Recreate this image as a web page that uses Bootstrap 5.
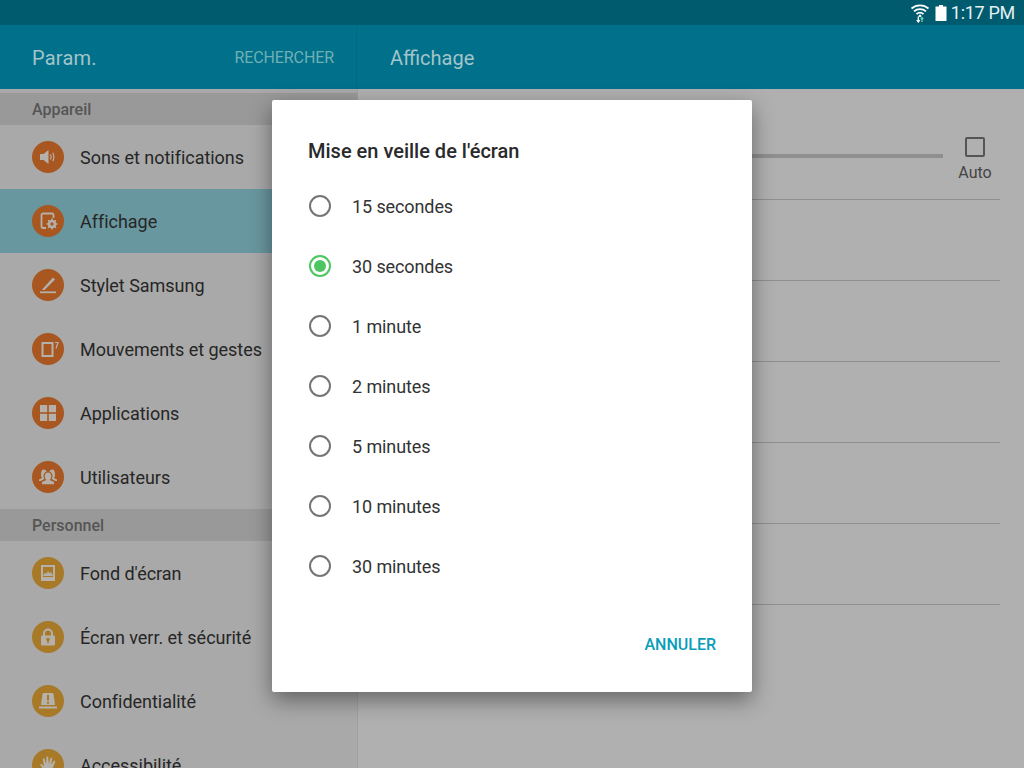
<!DOCTYPE html>
<html lang="fr">
<head>
<meta charset="utf-8">
<title>Param.</title>
<link rel="stylesheet" href="https://cdn.jsdelivr.net/npm/bootstrap@5.3.0/dist/css/bootstrap.min.css">
<style>
html,body{height:768px;overflow:hidden;background:#b0b0b0;font-family:Roboto,"Liberation Sans",sans-serif}
.stage{width:1024px;height:768px;overflow:hidden;position:relative}
.sbar{height:25px;background:#005b6f;color:#e6f0f2;font-size:18px;padding-right:9px;gap:4px}
.sbar span{line-height:25px;letter-spacing:-.3px}
.wifi{margin-right:1px}
.abar{height:64px;background:#00708b}
.ab-left{width:357px;padding:2px 22px 0 32px;border-right:1px solid #006a83}
.ab-title{font-size:20px;color:#a3c4c9;letter-spacing:.2px}
.ab-search{font-size:16px;color:#6fb0b5;letter-spacing:-.1px}
.ab-right{padding:2px 0 0 33px;font-size:20px;color:#a3c4c9}
.side{width:358px;background:#a9a9a9;border-right:1px solid #a0a0a0;padding-top:4px;height:679px;overflow:hidden;flex:none}
.sect{height:32px;line-height:34px;background:#999;color:#555;font-size:16px;font-weight:500;padding-left:32px}
.sitem{height:64px;padding-left:32px;gap:16px;font-size:18px;color:#262626;letter-spacing:-.03px}
.sitem.on{background:#69979f}
.ico{width:32px;height:32px;flex:none;display:block}
.pane{flex:1;padding:0 24px 0 32px}
.top-row{height:111px;border-bottom:1px solid #8f8f8f;padding-top:48px}
.track{flex:1;height:4px;margin-top:17px;background:#8f8f8f}
.auto{width:57px;color:#444;font-size:16px;padding-left:7px}
.tick{width:20px;height:20px;border:2px solid #555;border-radius:2px;margin-bottom:4px}
.pline{height:81px;border-bottom:1px solid #8f8f8f}
.dlg{position:absolute;left:272px;top:100px;width:480px;height:592px;background:#fff;border-radius:2px;border:0;box-shadow:0 8px 22px rgba(0,0,0,.42);padding:38px 36px 0}
.dlg-title{font-size:20px;font-weight:500;color:#2a2a2a;line-height:26px;margin:0 0 12px}
.opt{height:60px;gap:21px;font-size:18px;color:#333;padding-left:1px;letter-spacing:-.1px}
.rad{width:22px;height:22px;border:2px solid #757575;border-radius:50%;flex:none}
.rad.sel{border-color:#4cc660;position:relative}
.rad.sel::after{content:"";position:absolute;left:3px;top:3px;width:12px;height:12px;border-radius:50%;background:#4cc660}
.dlg-foot{margin-top:39px;font-size:16px;font-weight:500;color:#0a9dba;line-height:20px}
</style>
</head>
<body>
<div class="stage">
  <div class="sbar d-flex align-items-center justify-content-end">
    <svg class="wifi" width="20" height="20" viewBox="0 0 20 20" fill="none" stroke="#fff" stroke-width="1.8"><path d="M1.500 5.500C6.300 1.300 13.700 1.300 18.500 5.500"/><path d="M4 8.300C7.400 5.300 12.600 5.300 16 8.300"/><path d="M6.500 11C8.500 9.400 11.500 9.400 13.500 11"/><path d="M8.800 13.500L10 12.300 11.200 13.500" stroke-width="1.400"/><path d="M8.300 13.500V19M6.800 17.200L8.300 19 9.800 17.200" stroke-width="1.300"/><path d="M12 19V14.500M10.700 16L12 14.500 13.300 16" stroke="#9fc" stroke-opacity=".7" stroke-width="1.300"/></svg>
    <svg width="12" height="16" viewBox="0 0 12 16" fill="#fff"><path d="M4 0H8V1.500H11.500V16H.5V1.500H4Z"/></svg>
    <span>1:17 PM</span>
  </div>
  <div class="abar d-flex align-items-center">
    <div class="ab-left h-100 d-flex align-items-center justify-content-between">
      <span class="ab-title">Param.</span><span class="ab-search">RECHERCHER</span>
    </div>
    <div class="ab-right">Affichage</div>
  </div>
  <div class="d-flex">
    <div class="side">
      <div class="sect">Appareil</div>
      <div class="sitem d-flex align-items-center"><svg class="ico" viewBox="0 0 32 32"><circle cx="16" cy="16" r="16" fill="#a85720"/><path d="M8 13H11.500L16.500 9V23L11.500 19H8Z" fill="#b5b0aa"/><path d="M18.500 13.500Q19.800 16 18.500 18.500M20.800 11.800Q22.800 16 20.800 20.200" fill="none" stroke="#b5b0aa" stroke-width="1.200"/></svg><span>Sons et notifications</span></div>
      <div class="sitem on d-flex align-items-center"><svg class="ico" viewBox="0 0 32 32"><circle cx="16" cy="16" r="16" fill="#a85720"/><path d="M14 23H11A1.500 1.500 0 0 1 9.500 21.500V10A1.500 1.500 0 0 1 11 8.500H20A1.500 1.500 0 0 1 21.500 10V13" fill="none" stroke="#b5b0aa" stroke-width="1.800"/><circle cx="20" cy="19" r="3" fill="none" stroke="#b5b0aa" stroke-width="2.600"/><path d="M20 13.600V24.400M14.600 19H25.400M16.200 15.200L23.800 22.800M23.800 15.200L16.200 22.800" stroke="#b5b0aa" stroke-width="1.600" stroke-dasharray="2 6.800"/></svg><span>Affichage</span></div>
      <div class="sitem d-flex align-items-center"><svg class="ico" viewBox="0 0 32 32"><circle cx="16" cy="16" r="16" fill="#a85720"/><path d="M10.500 20L21 8.500 23 10.500 12.500 21H10.500Z" fill="#b5b0aa"/><path d="M8 23.300H24" stroke="#b5b0aa" stroke-width="1.800"/></svg><span>Stylet Samsung</span></div>
      <div class="sitem d-flex align-items-center"><svg class="ico" viewBox="0 0 32 32"><circle cx="16" cy="16" r="16" fill="#a85720"/><rect x="10.500" y="10" width="10" height="13" fill="none" stroke="#b5b0aa" stroke-width="2"/><path d="M23 9.500H26L24 15.500" fill="none" stroke="#b5b0aa" stroke-width="1.200"/></svg><span>Mouvements et gestes</span></div>
      <div class="sitem d-flex align-items-center"><svg class="ico" viewBox="0 0 32 32"><circle cx="16" cy="16" r="16" fill="#a85720"/><g fill="#b5b0aa"><rect x="8" y="8" width="7.200" height="7.200"/><rect x="16.800" y="8" width="7.200" height="7.200"/><rect x="8" y="16.800" width="7.200" height="7.200"/><rect x="16.800" y="16.800" width="7.200" height="7.200"/></g></svg><span>Applications</span></div>
      <div class="sitem d-flex align-items-center"><svg class="ico" viewBox="0 0 32 32"><circle cx="16" cy="16" r="16" fill="#a85720"/><g fill="#b5b0aa"><path d="M16 11.500C18 11.500 19.300 13 19.300 15 19.300 17 18.500 18.300 17.800 19L22 21V23.300H10V21L14.200 19C13.500 18.300 12.700 17 12.700 15 12.700 13 14 11.500 16 11.500Z"/><path d="M11.500 8.500C13 8.500 14.300 9.300 14.700 10.500 12.500 11 11.500 13 11.500 15 11.500 16 11.800 17 12.300 18L8.800 20H7V18.500L10 17C9.300 16 9 15 9 13.500 9 10.500 9.800 8.500 11.500 8.500Z"/><path d="M20.500 8.500C19 8.500 17.700 9.300 17.300 10.500 19.500 11 20.500 13 20.500 15 20.500 16 20.200 17 19.700 18L23.200 20H25V18.500L22 17C22.700 16 23 15 23 13.500 23 10.500 22.200 8.500 20.500 8.500Z"/></g></svg><span>Utilisateurs</span></div>
      <div class="sect">Personnel</div>
      <div class="sitem d-flex align-items-center"><svg class="ico" viewBox="0 0 32 32"><circle cx="16" cy="16" r="16" fill="#a87a28"/><rect x="9" y="8" width="14" height="16" fill="#b5b0aa"/><rect x="11" y="10" width="10" height="10" fill="#a87a28"/><path d="M11 19L13 15.500 14.500 17 16 14 17.500 16.500 19 15 21 19Z" fill="#b5b0aa"/></svg><span>Fond d'écran</span></div>
      <div class="sitem d-flex align-items-center"><svg class="ico" viewBox="0 0 32 32"><circle cx="16" cy="16" r="16" fill="#a87a28"/><path d="M12 15V12.500A4 4 0 0 1 20 12.500V15" fill="none" stroke="#b5b0aa" stroke-width="2"/><rect x="9" y="14.500" width="14" height="10" rx="1" fill="#b5b0aa"/><circle cx="16" cy="18.500" r="1.800" fill="#a87a28"/><rect x="15.200" y="19" width="1.600" height="3.200" fill="#a87a28"/></svg><span>Écran verr. et sécurité</span></div>
      <div class="sitem d-flex align-items-center"><svg class="ico" viewBox="0 0 32 32"><circle cx="16" cy="16" r="16" fill="#a87a28"/><path d="M11.500 8H20.500Q21.500 8 21.500 9L23 20H9L10.500 9Q10.500 8 11.500 8Z" fill="#b5b0aa"/><rect x="7" y="21.500" width="18" height="2" fill="#b5b0aa"/><rect x="15" y="10" width="2" height="5.500" fill="#a87a28"/><rect x="15" y="16.800" width="2" height="2" fill="#a87a28"/></svg><span>Confidentialité</span></div>
      <div class="sitem d-flex align-items-center"><svg class="ico" viewBox="0 0 32 32"><circle cx="16" cy="16" r="16" fill="#a87a28"/><path d="M12 22L8 15.500 9.300 14.700 12 17.500 10.700 9.500 12.300 9.200 14 15 14.500 7.500H16.200L16.800 15 18.700 8.500 20.300 9 19.200 16 22 11.500 23.400 12.300 20.500 19.500 19.500 25H13Z" fill="#b5b0aa"/></svg><span>Accessibilité</span></div>
    </div>
    <div class="pane">
      <div class="top-row d-flex">
        <div class="track"></div>
        <div class="auto d-flex flex-column align-items-center"><div class="tick"></div><span>Auto</span></div>
      </div>
      <div class="pline"></div>
      <div class="pline"></div>
      <div class="pline"></div>
      <div class="pline"></div>
      <div class="pline"></div>
    </div>
  </div>
  <div class="dlg card">
    <h2 class="dlg-title">Mise en veille de l'écran</h2>
    <div class="opt d-flex align-items-center"><span class="rad"></span><span>15 secondes</span></div>
    <div class="opt d-flex align-items-center"><span class="rad sel"></span><span>30 secondes</span></div>
    <div class="opt d-flex align-items-center"><span class="rad"></span><span>1 minute</span></div>
    <div class="opt d-flex align-items-center"><span class="rad"></span><span>2 minutes</span></div>
    <div class="opt d-flex align-items-center"><span class="rad"></span><span>5 minutes</span></div>
    <div class="opt d-flex align-items-center"><span class="rad"></span><span>10 minutes</span></div>
    <div class="opt d-flex align-items-center"><span class="rad"></span><span>30 minutes</span></div>
    <div class="dlg-foot text-end">ANNULER</div>
  </div>
</div>
<script src="https://cdn.jsdelivr.net/npm/bootstrap@5.3.0/dist/js/bootstrap.bundle.min.js"></script>
</body>
</html>
